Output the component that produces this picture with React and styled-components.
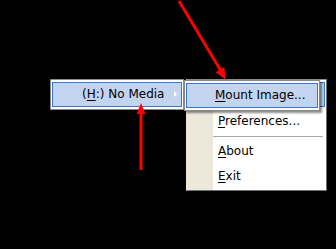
import styled, { createGlobalStyle } from "styled-components";

const Global = createGlobalStyle`
	html, body {
		margin: 0;
		background: #000;
	}
`;

const Desktop = styled.div`
	position: relative;
	width: 336px;
	height: 249px;
	background: #000;
	overflow: hidden;
	padding: 79px 0 0 50px;
	box-sizing: border-box;
	font-family: "DejaVu Sans", Verdana, sans-serif;
	font-size: 12px;
	color: #000;
`;

const MenuRow = styled.div`
	display: flex;
	align-items: flex-start;
`;

const Menu = styled.div`
	position: relative;
	box-sizing: border-box;
	width: ${(p) => p.$width}px;
	background: #fff;
	border: 1px solid #8a8a8a;
	padding: 2px 1px;
	display: flex;
	flex-direction: column;
`;

const MainMenu = styled(Menu)`
	margin-left: 2px;
	padding-bottom: 1px;
	background: linear-gradient(to right, #ece9db 0 26px, #fff 26px);
	border-color: #8a8a8a #6f6f6f #6f6f6f #ece9db;
`;

const Submenu = styled(Menu)`
	position: absolute;
	top: 0;
	left: -3px;
	box-shadow: 2px 2px 2px rgba(0, 0, 0, 0.45);
	z-index: 2;
`;

const Item = styled.div`
	position: relative;
	box-sizing: border-box;
	height: 25px;
	line-height: 23px;
	margin-top: ${(p) => p.$gap || 0}px;
	padding-left: ${(p) => p.$indent}px;
	border: 1px solid ${(p) => (p.$active ? "#3a76d4" : "transparent")};
	background: ${(p) => (p.$active ? "#c2d4ee" : "transparent")};
	white-space: nowrap;

	u {
		text-decoration: underline;
		text-underline-offset: 2px;
	}
`;

const SubArrow = styled.span`
	position: absolute;
	right: 4px;
	top: 8px;
	width: 0;
	height: 0;
	border-top: 3px solid transparent;
	border-bottom: 3px solid transparent;
	border-left: 3px solid #fff;
`;

const Separator = styled.div`
	height: 5px;
	margin-left: 25px;
	display: flex;
	align-items: center;
	&::after {
		content: "";
		flex: 1;
		height: 1px;
		background: #a8a8a8;
		margin-right: 2px;
	}
`;

const Overlay = styled.svg`
	position: absolute;
	left: 0;
	top: 0;
	pointer-events: none;
	z-index: 5;
`;

export default function App() {
	return (
		<>
			<Global />
			<Desktop>
				<MenuRow>
					<Menu $width={134}>
						<Item $active $indent={29}>
							(<u>H</u>:) No Media
							<SubArrow />
						</Item>
					</Menu>
					<MainMenu $width={141}>
						<Item $active $indent={29}>&nbsp;</Item>
						<Item $gap={2} $indent={29}>
							<u>P</u>references...
						</Item>
						<Separator />
						<Item $indent={29}>
							<u>A</u>bout
						</Item>
						<Item $indent={29}>
							<u>E</u>xit
						</Item>
						<Submenu $width={136}>
							<Item $active $indent={28}>
								<u>M</u>ount Image...
							</Item>
						</Submenu>
					</MainMenu>
				</MenuRow>
				<Overlay width="336" height="249" viewBox="0 0 336 249">
					<line x1="179" y1="1" x2="221" y2="71" stroke="#ff0000" strokeWidth="3" />
					<polygon points="226,80 215.6,72.3 224.2,67.1" fill="#ff0000" />
					<line x1="141" y1="112" x2="141" y2="170" stroke="#ff0000" strokeWidth="3" />
					<polygon points="141,103 136.5,114 145.5,114" fill="#ff0000" />
				</Overlay>
			</Desktop>
		</>
	);
}
